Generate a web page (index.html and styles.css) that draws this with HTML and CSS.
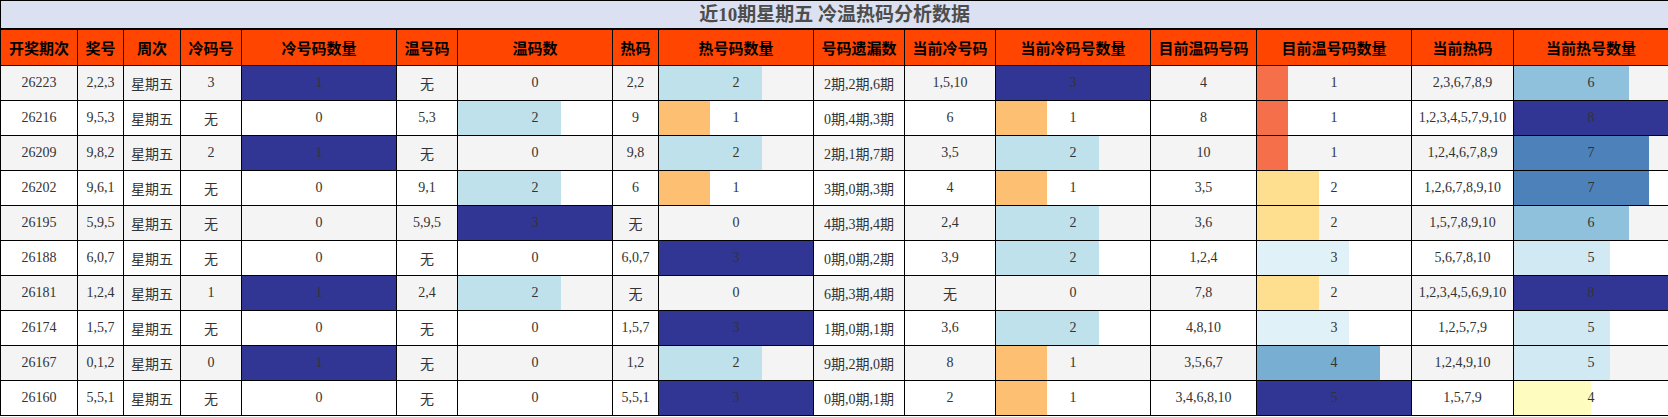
FILE: index.html
```html
<!DOCTYPE html>
<html lang="zh">
<head>
<meta charset="utf-8">
<title>近10期星期五 冷温热码分析数据</title>
<link rel="stylesheet" href="styles.css">
</head>
<body>
<table class="data">
<colgroup>
<col class="w77"><col class="w46"><col class="w57"><col class="w61"><col class="w155"><col class="w61"><col class="w155"><col class="w46"><col class="w155"><col class="w91"><col class="w91"><col class="w155"><col class="w106"><col class="w155"><col class="w102"><col class="w155">
</colgroup>
<thead>
<tr class="title-row"><th colspan="16" class="title">近10期星期五 冷温热码分析数据</th></tr>
<tr class="head-row">
<th>开奖期次</th><th>奖号</th><th>周次</th><th>冷码号</th><th>冷号码数量</th><th>温号码</th><th>温码数</th><th>热码</th><th>热号码数量</th><th>号码遗漏数</th><th>当前冷号码</th><th>当前冷码号数量</th><th>目前温码号码</th><th>目前温号码数量</th><th>当前热码</th><th>当前热号数量</th>
</tr>
</thead>
<tbody>
<tr>
<td>26223</td><td>2,2,3</td><td>星期五</td><td>3</td>
<td class="bar navy" style="--w:100%">1</td><td>无</td><td>0</td><td>2,2</td>
<td class="bar lb" style="--w:66.667%">2</td><td>2期,2期,6期</td><td>1,5,10</td>
<td class="bar navy" style="--w:100%">3</td><td>4</td>
<td class="bar red" style="--w:20%">1</td><td>2,3,6,7,8,9</td>
<td class="bar b6" style="--w:75%">6</td>
</tr>
<tr>
<td>26216</td><td>9,5,3</td><td>星期五</td><td>无</td>
<td>0</td><td>5,3</td><td class="bar lb" style="--w:66.667%">2</td><td>9</td>
<td class="bar orange" style="--w:33.333%">1</td><td>0期,4期,3期</td><td>6</td>
<td class="bar orange" style="--w:33.333%">1</td><td>8</td>
<td class="bar red" style="--w:20%">1</td><td>1,2,3,4,5,7,9,10</td>
<td class="bar navy" style="--w:100%">8</td>
</tr>
<tr>
<td>26209</td><td>9,8,2</td><td>星期五</td><td>2</td>
<td class="bar navy" style="--w:100%">1</td><td>无</td><td>0</td><td>9,8</td>
<td class="bar lb" style="--w:66.667%">2</td><td>2期,1期,7期</td><td>3,5</td>
<td class="bar lb" style="--w:66.667%">2</td><td>10</td>
<td class="bar red" style="--w:20%">1</td><td>1,2,4,6,7,8,9</td>
<td class="bar b7" style="--w:87.5%">7</td>
</tr>
<tr>
<td>26202</td><td>9,6,1</td><td>星期五</td><td>无</td>
<td>0</td><td>9,1</td><td class="bar lb" style="--w:66.667%">2</td><td>6</td>
<td class="bar orange" style="--w:33.333%">1</td><td>3期,0期,3期</td><td>4</td>
<td class="bar orange" style="--w:33.333%">1</td><td>3,5</td>
<td class="bar yellow" style="--w:40%">2</td><td>1,2,6,7,8,9,10</td>
<td class="bar b7" style="--w:87.5%">7</td>
</tr>
<tr>
<td>26195</td><td>5,9,5</td><td>星期五</td><td>无</td>
<td>0</td><td>5,9,5</td><td class="bar navy" style="--w:100%">3</td><td>无</td>
<td>0</td><td>4期,3期,4期</td><td>2,4</td>
<td class="bar lb" style="--w:66.667%">2</td><td>3,6</td>
<td class="bar yellow" style="--w:40%">2</td><td>1,5,7,8,9,10</td>
<td class="bar b6" style="--w:75%">6</td>
</tr>
<tr>
<td>26188</td><td>6,0,7</td><td>星期五</td><td>无</td>
<td>0</td><td>无</td><td>0</td><td>6,0,7</td>
<td class="bar navy" style="--w:100%">3</td><td>0期,0期,2期</td><td>3,9</td>
<td class="bar lb" style="--w:66.667%">2</td><td>1,2,4</td>
<td class="bar pale" style="--w:60%">3</td><td>5,6,7,8,10</td>
<td class="bar b5" style="--w:62.5%">5</td>
</tr>
<tr>
<td>26181</td><td>1,2,4</td><td>星期五</td><td>1</td>
<td class="bar navy" style="--w:100%">1</td><td>2,4</td><td class="bar lb" style="--w:66.667%">2</td><td>无</td>
<td>0</td><td>6期,3期,4期</td><td>无</td>
<td>0</td><td>7,8</td>
<td class="bar yellow" style="--w:40%">2</td><td>1,2,3,4,5,6,9,10</td>
<td class="bar navy" style="--w:100%">8</td>
</tr>
<tr>
<td>26174</td><td>1,5,7</td><td>星期五</td><td>无</td>
<td>0</td><td>无</td><td>0</td><td>1,5,7</td>
<td class="bar navy" style="--w:100%">3</td><td>1期,0期,1期</td><td>3,6</td>
<td class="bar lb" style="--w:66.667%">2</td><td>4,8,10</td>
<td class="bar pale" style="--w:60%">3</td><td>1,2,5,7,9</td>
<td class="bar b5" style="--w:62.5%">5</td>
</tr>
<tr>
<td>26167</td><td>0,1,2</td><td>星期五</td><td>0</td>
<td class="bar navy" style="--w:100%">1</td><td>无</td><td>0</td><td>1,2</td>
<td class="bar lb" style="--w:66.667%">2</td><td>9期,2期,0期</td><td>8</td>
<td class="bar orange" style="--w:33.333%">1</td><td>3,5,6,7</td>
<td class="bar mid" style="--w:80%">4</td><td>1,2,4,9,10</td>
<td class="bar b5" style="--w:62.5%">5</td>
</tr>
<tr>
<td>26160</td><td>5,5,1</td><td>星期五</td><td>无</td>
<td>0</td><td>无</td><td>0</td><td>5,5,1</td>
<td class="bar navy" style="--w:100%">3</td><td>0期,0期,1期</td><td>2</td>
<td class="bar orange" style="--w:33.333%">1</td><td>3,4,6,8,10</td>
<td class="bar navy" style="--w:100%">5</td><td>1,5,7,9</td>
<td class="bar b4" style="--w:50%">4</td>
</tr>
</tbody>
</table>
</body>
</html>
```
FILE: styles.css
```css
html, body {
  margin: 0;
  padding: 0;
  background: #ffffff;
}

.data {
  width: 1668px;
  border-collapse: collapse;
  table-layout: fixed;
  font-family: "Liberation Serif", "Noto Sans CJK SC", serif;
  font-size: 14px;
  color: #333333;
}

.w46 { width: 46px; }
.w57 { width: 57px; }
.w61 { width: 61px; }
.w77 { width: 77px; }
.w91 { width: 91px; }
.w102 { width: 102px; }
.w106 { width: 106px; }
.w155 { width: 155px; }

.data th,
.data td {
  border: 1px solid #000000;
  padding: 0;
  text-align: center;
  vertical-align: middle;
  white-space: nowrap;
  overflow: hidden;
}

.title-row .title {
  height: 27px;
  background: #dbe1f1;
  color: #4d4d4d;
  font-family: "Liberation Serif", "Noto Sans CJK SC", serif;
  font-size: 19px;
  font-weight: bold;
  border-bottom: 2px solid #000000;
  line-height: 27px;
}

.head-row th {
  height: 35px;
  background: #ff4500;
  color: #000000;
  font-family: "Noto Sans CJK SC", sans-serif;
  font-size: 15px;
  font-weight: bold;
}

.data tbody td {
  height: 34px;
}

.data tbody tr:nth-child(odd) {
  background: #f4f4f4;
}

.data tbody tr:nth-child(even) {
  background: #ffffff;
}

.bar {
  background-image: linear-gradient(90deg, var(--c) var(--w), transparent var(--w));
  background-repeat: no-repeat;
}

.navy { --c: #313695; }
.lb { --c: #bee1ec; }
.orange { --c: #fdbf71; }
.red { --c: #f5704a; }
.yellow { --c: #fedf8f; }
.pale { --c: #e0f2f8; }
.mid { --c: #77aed2; }
.b4 { --c: #fefdbf; }
.b5 { --c: #d1e9f3; }
.b6 { --c: #8fc1dd; }
.b7 { --c: #4c81ba; }
```
